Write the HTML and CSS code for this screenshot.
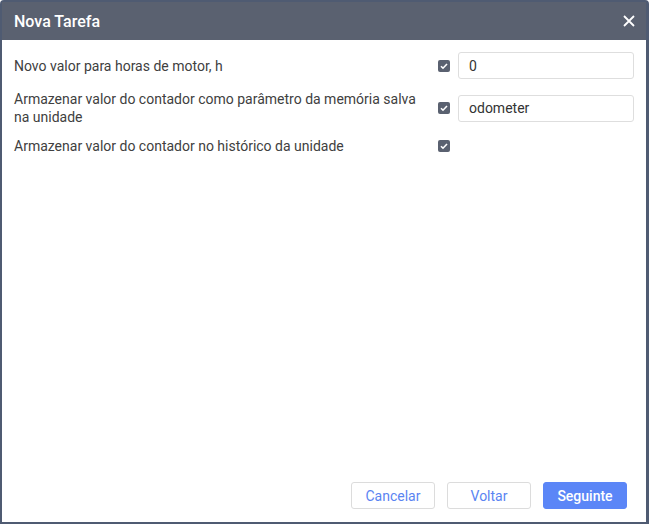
FILE: index.html
```html
<!DOCTYPE html>
<html>
<head>
<meta charset="utf-8">
<link rel="stylesheet" href="styles.css">
</head>
<body>
<div class="dialog">
  <div class="header">
    <span class="title">Nova Tarefa</span>
    <svg class="close" width="12" height="12" viewBox="0 0 12 12"><path d="M1 1L11 11M11 1L1 11" stroke="#fff" stroke-width="1.8" fill="none"/></svg>
  </div>
  <div class="body">
    <div class="row">
      <div class="label">Novo valor para horas de motor, h</div>
      <span class="check"><svg width="12" height="12" viewBox="0 0 12 12"><path d="M3 6.2L5 8.2L9 4" stroke="#fff" stroke-width="1.6" fill="none"/></svg></span>
      <input class="field" type="text" value="0">
    </div>
    <div class="row">
      <div class="label">Armazenar valor do contador como parâmetro da memória salva na unidade</div>
      <span class="check"><svg width="12" height="12" viewBox="0 0 12 12"><path d="M3 6.2L5 8.2L9 4" stroke="#fff" stroke-width="1.6" fill="none"/></svg></span>
      <input class="field" type="text" value="odometer">
    </div>
    <div class="row">
      <div class="label">Armazenar valor do contador no histórico da unidade</div>
      <span class="check"><svg width="12" height="12" viewBox="0 0 12 12"><path d="M3 6.2L5 8.2L9 4" stroke="#fff" stroke-width="1.6" fill="none"/></svg></span>
      <span></span>
    </div>
  </div>
  <div class="footer">
    <button class="btn">Cancelar</button>
    <button class="btn">Voltar</button>
    <button class="btn primary">Seguinte</button>
  </div>
</div>
</body>
</html>
```
FILE: styles.css
```css
html, body {
  margin: 0;
  padding: 0;
  background: #fff;
}
.dialog {
  width: 649px;
  height: 524px;
  box-sizing: border-box;
  border: 2px solid #4f5b72;
  border-right-width: 3px;
  border-radius: 4px 4px 0 0;
  display: flex;
  flex-direction: column;
  font-family: Roboto, "Liberation Sans", sans-serif;
  background: #fff;
}
.header {
  height: 38px;
  background: #5a6170;
  display: flex;
  align-items: center;
  justify-content: space-between;
  padding: 0 12px 0 12px;
  flex-shrink: 0;
}
.title {
  color: #fff;
  font-size: 16px;
  font-weight: 500;
}
.close {
  display: block;
  margin-right: -1px;
}
.body {
  flex: 1;
  padding: 12px 12px 0 12px;
  display: flex;
  flex-direction: column;
  gap: 11px;
}
.row {
  display: grid;
  grid-template-columns: 1fr 12px 176px;
  column-gap: 8px;
  align-items: center;
}
.label {
  font-size: 14px;
  line-height: 18px;
  color: #404040;
  padding-right: 4px;
}
.check {
  width: 12px;
  height: 12px;
  border-radius: 2px;
  background: #5a6170;
  display: block;
}
.check svg {
  display: block;
}
.field {
  box-sizing: border-box;
  height: 27px;
  width: 176px;
  border: 1px solid #dedede;
  border-radius: 3px;
  padding: 0 10px;
  font-family: Roboto, "Liberation Sans", sans-serif;
  font-size: 14px;
  color: #333;
  outline: none;
  margin: 0;
}
.footer {
  display: flex;
  justify-content: flex-end;
  gap: 12px;
  padding: 0 19px 13px 0;
}
.btn {
  width: 84px;
  height: 27px;
  box-sizing: border-box;
  border: 1px solid #dcdcdc;
  border-radius: 3px;
  background: #fff;
  color: #5a84f2;
  font-family: Roboto, "Liberation Sans", sans-serif;
  font-size: 14px;
  padding: 0;
  margin: 0;
}
.btn.primary {
  background: #5b86f7;
  border-color: #5b86f7;
  color: #fff;
  font-weight: 500;
}
```
